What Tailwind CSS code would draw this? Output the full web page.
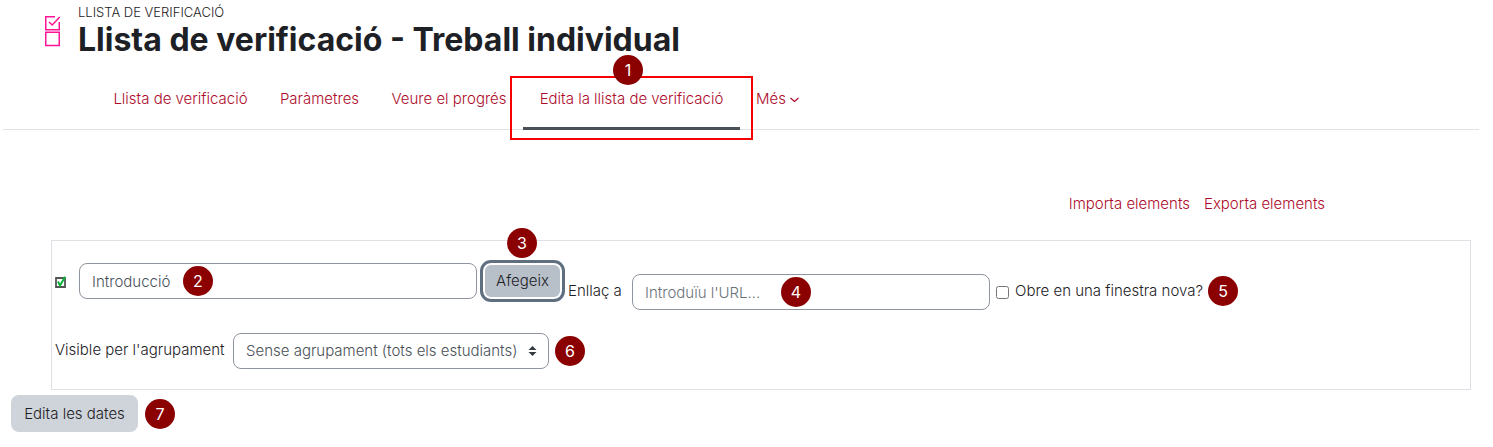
<!DOCTYPE html>
<html lang="ca">
<head>
  <meta charset="UTF-8">
  <meta name="viewport" content="width=device-width, initial-scale=1.0">
  <title>Llista de verificació - Treball individual</title>
  <script src="https://cdn.jsdelivr.net/npm/@tailwindcss/browser@4"></script>
</head>
<body class="bg-white font-['Inter',sans-serif] text-[15px] leading-6 font-light text-[#1d2125]">
  <!-- Header -->
  <header class="flex pl-[45px] pt-1">
    <svg class="w-4 h-8 mt-3 mr-[17px] shrink-0" viewBox="0 0 16 32" fill="none" stroke="#ff1494" stroke-width="1.5">
      <path d="M10 .75H.75v13h13.500V6M4 6l3.250 3L14.750 1M.75 16.250h13.500v13.250H.75z"/>
    </svg>
    <div>
      <p class="text-[13px] leading-4">LLISTA DE VERIFICACIÓ</p>
      <h1 class="text-[32px] leading-10 font-bold">Llista de verificació - Treball individual</h1>
    </div>
  </header>

  <!-- Tabs -->
  <nav class="flex ml-[3px] mr-[14px] mt-2 pl-[94px] border-b border-[#dee2e6] text-[#ad0b2a] text-center whitespace-nowrap">
    <a href="#" class="w-[167px] pt-[19px] h-[61px]">Llista de verificació</a>
    <a href="#" class="w-[111px] pt-[19px] h-[61px]">Paràmetres</a>
    <a href="#" class="w-[148px] pt-[19px] h-[61px]">Veure el progrés</a>
    <a href="#" class="relative w-[217px] pt-[19px] h-[62px] -mb-px border-b-3 border-[#495057]">Edita la llista de verificació
      <span class="absolute -inset-x-[13px] top-2 -bottom-[13px] border-2 border-[#f40000]"></span>
      <span class="absolute left-[90px] -top-[13px] size-[30px] rounded-full bg-[#8b0000] text-white text-center text-base leading-[30px] font-normal">1</span>
    </a>
    <a href="#" class="flex gap-1 px-4 pt-[19px] h-[61px]">Més
      <svg class="w-[9px] h-2 mt-[9px]" viewBox="0 0 9 8" fill="none" stroke="currentColor" stroke-width="1.2"><path d="M.5 2l4 3.500L8.500 2"/></svg>
    </a>
  </nav>

  <div class="flex justify-end gap-[14px] mt-[62px] mr-[168px] text-[#ad0b2a]">
    <a href="#">Importa elements</a>
    <a href="#">Exporta elements</a>
  </div>

  <!-- New item form -->
  <form class="relative ml-[51px] mr-[22px] mt-6 h-[150px] border border-[#dee2e6] pl-[3px] pt-[19px]">
    <div class="flex items-start whitespace-nowrap">
      <svg class="w-3 h-3 mt-4 mr-3 shrink-0" viewBox="0 0 12 12" fill="none"><path d="M1 2h9v9H1z" stroke="#555" stroke-width="1.800"/><path d="M3 5.500l2 4L10.200.8" stroke="#0ab53c" stroke-width="2"/></svg>
      <div class="relative mt-[3px]">
        <input type="text" value="Introducció" aria-label="Element" class="block w-[398px] h-9 px-3 border border-[#8f959e] rounded-lg text-[#495057]">
        <span class="absolute left-[104px] top-[3px] size-[30px] rounded-full bg-[#8b0000] text-white text-center text-base leading-[30px] font-normal">2</span>
      </div>
      <div class="relative ml-[3px]">
        <button type="button" class="block w-[85px] h-[42px] border-3 border-[#5f6f80] rounded-[11px] bg-[#b7bfc9] shadow-[inset_0_0_0_2px_#fff]">Afegeix</button>
        <span class="absolute left-[27px] -top-8 size-[30px] rounded-full bg-[#8b0000] text-white text-center text-base leading-[30px] font-normal">3</span>
      </div>
      <label for="url" class="w-16 ml-[3px] mt-[19px]">Enllaç a</label>
      <div class="relative mt-[14px]">
        <input id="url" type="text" placeholder="Introduïu l'URL..." class="block w-[358px] h-9 px-3 border border-[#8f959e] rounded-lg placeholder:text-[#6a737b]">
        <span class="absolute left-[149px] top-[3px] size-[30px] rounded-full bg-[#8b0000] text-white text-center text-base leading-[30px] font-normal">4</span>
      </div>
      <input id="newwin" type="checkbox" class="size-[13px] ml-[6px] mt-[26px]">
      <label for="newwin" class="w-[193px] ml-[6px] mt-[19px]">Obre en una finestra nova?</label>
      <span class="mt-4 size-[30px] rounded-full bg-[#8b0000] text-white text-center text-base leading-[30px] font-normal">5</span>
    </div>
    <div class="flex items-start mt-[23px] whitespace-nowrap">
      <label for="grouping" class="w-[178px] mt-[5px]">Visible per l'agrupament</label>
      <div class="relative">
        <select id="grouping" class="block appearance-none w-[316px] h-9 pl-3 border border-[#8f959e] rounded-lg text-[#495057]">
          <option>Sense agrupament (tots els estudiants)</option>
        </select>
        <svg class="absolute right-3 top-[13px] w-[9px] h-[10px] pointer-events-none" viewBox="0 0 8 10" fill="#343a40"><path d="M4 0l4 4H0zM4 10L0 6h8z"/></svg>
      </div>
      <span class="ml-[6px] mt-[3px] size-[30px] rounded-full bg-[#8b0000] text-white text-center text-base leading-[30px] font-normal">6</span>
    </div>
  </form>

  <div class="flex items-center gap-[7px] ml-[11px] mt-[5px]">
    <button type="button" class="w-[127px] h-[37px] rounded-lg bg-[#ced4da]">Edita les dates</button>
    <span class="size-[30px] rounded-full bg-[#8b0000] text-white text-center text-base leading-[30px] font-normal">7</span>
  </div>
</body>
</html>
